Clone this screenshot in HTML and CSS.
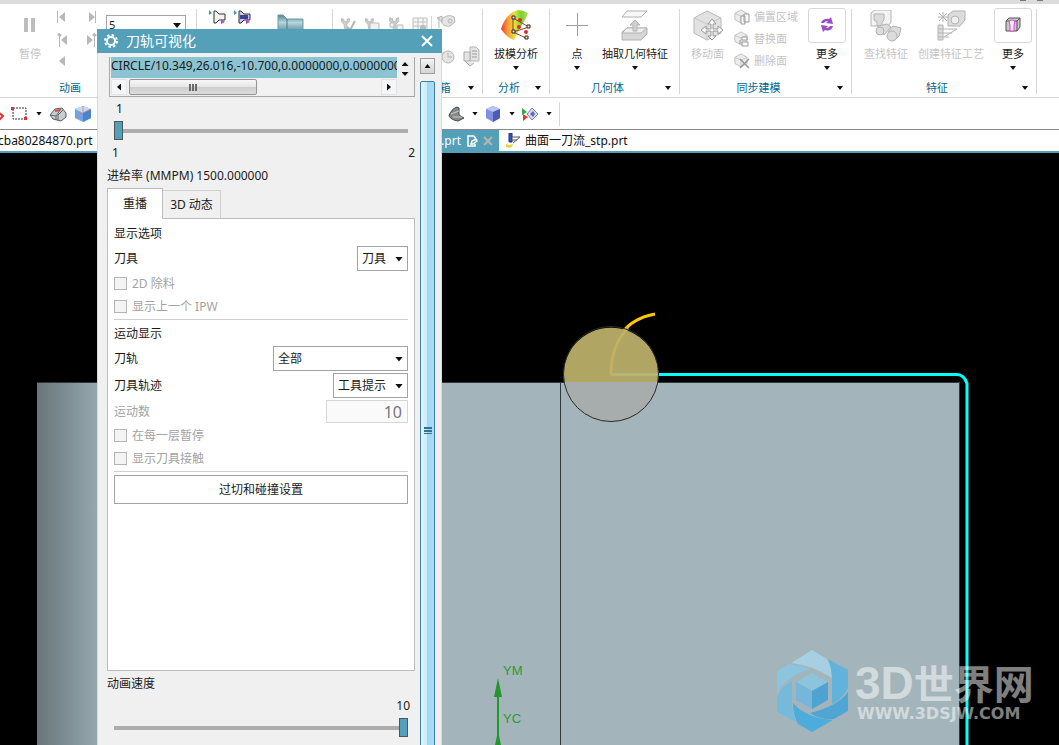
FILE: index.html
```
<!DOCTYPE html>
<html lang="zh-CN">
<head>
    <meta charset="UTF-8">
    <meta name="viewport" content="width=device-width, initial-scale=1.0">
    <title>刀轨可视化</title>
    <link rel="stylesheet" href="styles.css">
</head>
<body>
    <svg class="defs" aria-hidden="true">
        <defs>
            <linearGradient id="partShade">
                <stop offset="0" stop-color="#6a7679"/>
                <stop offset="0.5" stop-color="#83949a"/>
                <stop offset="1" stop-color="#a3b5bb"/>
            </linearGradient>
            <linearGradient id="rainbow">
                <stop offset="0" stop-color="#f03a2c"/>
                <stop offset="0.25" stop-color="#f79a3a"/>
                <stop offset="0.5" stop-color="#e8e236"/>
                <stop offset="0.75" stop-color="#6fd53c"/>
                <stop offset="1" stop-color="#b8e04a"/>
            </linearGradient>
            <linearGradient id="steel" x2="0" y2="1">
                <stop offset="0" stop-color="#4f8596"/>
                <stop offset="0.5" stop-color="#b9d5dc"/>
                <stop offset="1" stop-color="#6c9cab"/>
            </linearGradient>
            <symbol id="greyCube" viewBox="0 0 16 16">
                <path d="M1 5 8 1l7 4v7l-7 4-7-4z" fill="#ececec" stroke="#bcbcbc"/>
                <path d="M1 5l7 3 7-3M8 8v8" fill="none" stroke="#c4c4c4"/>
            </symbol>
            <symbol id="wrench" viewBox="0 0 18 16">
                <path d="M2 1v4l3 3 1 6 3 1V8l3-3V1L9 2v3H5V2z" fill="#cfcfcf" stroke="#b4b4b4"/>
            </symbol>
        </defs>
    </svg>

    <div class="title-strip"><span></span><span></span></div>

    <header class="ribbon">
        <section class="group group-animation">
            <div class="group-body">
                <button class="big-btn pause disabled">
                    <svg width="32" height="32"><path d="M10 8h4v14h-4zM17 8h4v14h-4z" fill="#bdbdbd"/></svg>
                    <span>暂停</span>
                </button>
                <svg class="step-icons" width="42" height="64" fill="#b8b8b8">
                    <path d="M2 1h1v12H2zM10 2v10L4 7zM34 2v10l6-5zM40 1h1v12h-1z"/>
                    <path d="M4 23h1v14H4zM2 25l2-2 3 2-2 2zM12 25v10l-6-5zM32 25v10l6-5zM39 23h1v14h-1zM37 25l2-2 3 2-2 2z"/>
                    <path d="M10 46v10l-6-5z"/>
                </svg>
                <span class="combo frame-combo">
                    <select aria-label="帧"><option>5</option></select>
                </span>
            </div>
            <div class="group-label"><span>动画</span></div>
        </section>
        <section class="group group-tool">
            <div class="group-body">
                <svg width="44" height="20" fill="none" stroke="#333">
                    <path d="M5 1h2l3 3h6v6h-6l-3 3H5z" fill="#f2f2ee"/><path d="M30 1h2l3 3h6v6h-6l-3 3h-2z" fill="#c9cade"/><path d="M31 5h8v4h-8z" fill="#3d3f9c" stroke="none"/>
                    <path d="M0 0v5l3-2zM25 0v5l3-2z" fill="#3c93ba" stroke="none"/>
                    <path d="M12 9v5l4-2zM37 9v5l4-2z" fill="#b24cc0" stroke="none"/>
                </svg>
                <svg class="holder-icon" width="28" height="24"><path d="M1 1h5l4 4h16v11H1z" fill="url(#steel)" stroke="#6d9ba8"/><path d="M10 5v11" stroke="#447a8c"/></svg>
            </div>
        </section>
        <section class="group group-box">
            <div class="group-body">
                <div class="checks">
                    <svg width="16" height="20"><use href="#wrench" width="14" height="16"/><path d="m7 11 3 3 5-9" fill="none" stroke="#b5b5b5" stroke-width="2"/></svg>
                    <svg width="16" height="20"><use href="#wrench" width="14" height="16"/><path d="M6 7h9v8H6z" fill="#f1f1f1" stroke="#bbb"/></svg>
                    <svg width="16" height="20"><use href="#wrench" width="16" height="16"/><path d="M2 7h4v4H2zM9 9h6v6H9z" fill="#f1f1f1" stroke="#bbb"/></svg>
                    <svg width="16" height="20"><path d="M1 2h14v13H1zM1 6h14M1 10h14M6 2v13M11 2v13" fill="#f5f5f5" stroke="#c2c2c2"/><circle cx="11" cy="12" r="3" fill="#bbb"/></svg>
                </div>
                <svg width="50" height="64" fill="#e4e4e4" stroke="#b5b5b5">
                    <path d="M7 8v11M5 9l5 4V7z"/><path d="M10 10c4-4 9-4 12-2l1 5-5 4c-4 1-7-1-8-3z"/><circle cx="18" cy="12" r="2"/>
                    <circle cx="16" cy="48" r="6"/><path d="M16 44v4h4M8 44h4" fill="none"/>
                    <path d="M38 38h6l3 3v11h-9z"/><path d="M40 42h5M40 45h5M40 48h5" stroke="#9d9d9d"/><path d="M32 43h6v9h-6zM33 52l5 5 4-3" stroke="#a9a9a9"/>
                </svg>
            </div>
            <div class="group-label"><span>工具箱</span><i class="arrow"></i></div>
        </section>
        <section class="group group-analysis">
            <div class="group-body">
                <button class="big-btn">
                    <svg width="32" height="32">
                        <path d="M1 19C4 9 10 2 18 0q5 0 10 3-2 6-5 10-5 8-9 17Q7 28 1 19z" fill="url(#rainbow)"/>
                        <path d="M13 8v14l13 6M13 8l16 9-16 5" fill="none" stroke="#9b3a2b"/>
                        <g fill="#e02b2b"><circle cx="20" cy="10" r="2"/><circle cx="19" cy="17" r="2"/><circle cx="26" cy="22" r="2"/></g>
                        <path d="M12 6h3v3h-3zM27 15h3v3h-3zM12 20h3v3h-3zM25 26h3v3h-3z" fill="#ffe85a" stroke="#33205a"/>
                    </svg>
                    <span>拔模分析</span>
                    <i class="arrow"></i>
                </button>
            </div>
            <div class="group-label"><span>分析</span><i class="arrow"></i></div>
        </section>
        <section class="group group-geometry">
            <div class="group-body">
                <button class="big-btn">
                    <svg width="32" height="32"><path d="M16 3v23M5 15h22" stroke="#9c9c9c" stroke-width="1" shape-rendering="crispEdges"/></svg>
                    <span>点</span>
                    <i class="arrow"></i>
                </button>
                <button class="big-btn">
                    <svg width="32" height="32" stroke="#b2b2b2">
                        <path d="M8 1h20l-6 6H3z" fill="#f8f8f8"/>
                        <path d="M3 22l5-4h20v6l-6 6H3z" fill="#d6d6d6"/><path d="M3 23l5-5h20l-6 5z" fill="#efefef"/>
                        <path d="M14 21v-6h-3l5-5 5 5h-3v6z" fill="#d0d0d0"/>
                    </svg>
                    <span>抽取几何特征</span>
                    <i class="arrow"></i>
                </button>
            </div>
            <div class="group-label"><span>几何体</span><i class="arrow"></i></div>
        </section>
        <section class="group group-sync">
            <div class="group-body">
                <button class="big-btn disabled">
                    <svg width="32" height="32">
                        <path d="M2 8 15 1l14 7v15l-14 7-13-7z" fill="#e2e2e2" stroke="#b8b8b8"/><path d="M2 8l13 6 14-6M15 14v16" fill="none" stroke="#c6c6c6"/>
                        <path d="m20 9 4 5h-3v5h5v-3l5 4-5 4v-3h-5v5h3l-4 4-4-4h3v-5h-5v3l-5-4 5-4v3h5v-5h-3z" fill="#fff" stroke="#999"/>
                    </svg>
                    <span>移动面</span>
                </button>
                <div class="small-btns">
                    <button class="small-btn disabled"><svg width="16" height="16"><use href="#greyCube" width="14" height="14"/><path d="M7 7h4v8H7zM10 5h5v8h-5z" fill="#fff" stroke="#999"/></svg>偏置区域</button>
                    <button class="small-btn disabled"><svg width="16" height="16"><use href="#greyCube" width="14" height="14"/><path d="M8 6h5v3H8zM8 11h6v4H8zM6 9v4" fill="#fff" stroke="#999"/></svg>替换面</button>
                    <button class="small-btn disabled"><svg width="16" height="16"><use href="#greyCube" width="14" height="14"/><path d="m6 6 9 9M15 6l-9 9" fill="none" stroke="#999" stroke-width="1.5"/></svg>删除面</button>
                </div>
                <button class="big-btn more">
                    <svg width="32" height="32" fill="#9c4fc4"><path d="M10 14q2-5 8-4l2-2 2 7-7-1 2-2q-3 0-4 2zM22 17q-2 6-8 4l-2 2-2-7 7 1-2 2q3 0 4-2z"/></svg>
                    <span>更多</span>
                    <i class="arrow"></i>
                </button>
            </div>
            <div class="group-label"><span>同步建模</span><i class="arrow"></i></div>
        </section>
        <section class="group group-feature">
            <div class="group-body">
                <button class="big-btn disabled">
                    <svg width="32" height="32" stroke="#b3b3b3" fill="#dcdcdc">
                        <path d="M1 3 5 0h16v12l-3 4H1z" fill="#f3f3f3"/><path d="M4 4h10v6l-2 2v4H7v-4l-3-2z"/>
                        <path d="m8 16 9-2 4 3-7 8z"/><path d="m18 22 5-6 8 2-2 8-5 5z"/><circle cx="10" cy="21" r="4"/><circle cx="22" cy="26" r="5"/>
                    </svg>
                    <span>查找特征</span>
                </button>
                <button class="big-btn disabled">
                    <svg width="32" height="32" stroke="#b3b3b3" fill="#dcdcdc">
                        <path d="m13 5 5-4h12v9l-5 6H13z"/><circle cx="20" cy="10" r="4" fill="#efefef"/>
                        <path d="M8 2v10M3 7h10M4 3l8 8M12 3l-8 8" fill="none"/>
                        <path d="M3 15h5v15H3zM3 19h5M3 23h5M3 27h5M8 19h14M8 23h9M8 27h6M22 19l-13 8"/>
                    </svg>
                    <span>创建特征工艺</span>
                </button>
                <button class="big-btn more">
                    <svg width="32" height="32"><path d="M9 12l3-3h11v9l-3 4H9z" fill="#c8c8c8" stroke="#555"/><path d="M20 12v10M9 12h11l3-3" fill="none" stroke="#555"/><path d="M13 22v-6q-2-5 2-5t2 5v6z" fill="#eee" stroke="#ee3be4"/></svg>
                    <span>更多</span>
                    <i class="arrow"></i>
                </button>
            </div>
            <div class="group-label"><span>特征</span><i class="arrow"></i></div>
        </section>
    </header>

    <nav class="toolbar">
        <div class="tools-left">
            <svg width="4" height="18"><path d="M-2 7 3 11l-4 4" fill="none" stroke="#d33" stroke-width="2"/></svg>
            <svg width="18" height="18"><path d="M2 3h13v11H2z" fill="none" stroke="#333" stroke-dasharray="2 1"/><path d="M0 2h3v3H0zM13 12h3v3h-3z" fill="#e03030"/></svg>
            <i class="arrow"></i>
            <svg width="18" height="18"><path d="m1 10 5-6 7-1 4 5v4l-5 4-8-2z" fill="#c9ced2" stroke="#555b60"/><path d="m1 10 6 1 5-7M7 11v4M9 15v-5l5-5" fill="none" stroke="#62686c"/><path d="m6 6 5-1" stroke="#d84a3c" stroke-width="2"/></svg>
            <svg width="18" height="18"><path d="m1 4 8-3 8 3v9l-8 4-8-4z" fill="#6ea7e8"/><path d="m1 4 8-3 8 3-8 4z" fill="#c3dcf6"/><path d="m9 8 8-4v9l-8 4z" fill="#4b83cf"/><path d="M9 1v7l-8 5M9 8l8-4" fill="none" stroke="#e6705c" stroke-width=".7"/></svg>
        </div>
        <div class="tools-right">
            <svg width="17" height="18"><path d="M1 11Q3 4 9 2l2 1v7l5 3-6 3q-7-1-9-5z" fill="#85898c" stroke="#45494c"/><path d="m3 9 8-3M5 12h9" stroke="#ccc"/></svg>
            <i class="arrow"></i>
            <svg width="17" height="18"><path d="m1 4 7-3 7 3v9l-7 4-7-4z" fill="#7f90e0"/><path d="m1 4 7-3 7 3-7 3z" fill="#b9c5f5"/><path d="m8 7 7-3v9l-7 4z" fill="#4d5cb3"/></svg>
            <i class="arrow"></i>
            <svg width="17" height="18"><path d="M0 3v7l5-3z" fill="#33a845"/><path d="M1 9v7l5-4z" fill="#dc3b30"/><path d="m5 9 5-6 6 6-6 6z" fill="#d5dbf0" stroke="#777fa6"/><path d="m8 9 3-3 2 3-2 3z" fill="#5e6eb2"/></svg>
            <i class="arrow"></i>
            <span class="tool-divider"></span>
        </div>
    </nav>

    <nav class="file-tabs">
        <a class="file-tab first" href="#">cba80284870.prt</a>
        <a class="file-tab active" href="#">.prt
            <svg width="12" height="12" fill="none" stroke="#fff" stroke-width="1.5"><path d="M8 1H2v10h7V9M8 1l2 3M5 9l1-3 4-2 1 2-4 3z"/></svg>
            <svg width="10" height="10"><path d="m1 1 8 8M9 1 1 9" stroke="#b9b4b0" stroke-width="2"/></svg>
        </a>
        <a class="file-tab" href="#">
            <svg width="15" height="16"><path d="M4 0h3v9H4z" fill="#3652b8" stroke="#26357c"/><path d="M7 4h8l-7 6M7 7h5" fill="none" stroke="#555"/><path d="M1 11l3 1 4-1-1 3-3 1-3-1z" fill="#e7d548"/></svg>
            曲面一刀流_stp.prt
        </a>
    </nav>

    <main class="viewport">
        <svg class="scene" viewBox="0 153 1059 592" preserveAspectRatio="xMinYMin slice">
            <!-- workpiece -->
            <path d="M37 382h923v363H37z" fill="#a3b5bb"/>
            <path d="M37 382h75v363H37z" fill="url(#partShade)"/>
            <path d="M37 382.5h922.500V745M560.500 382V745" fill="none" stroke="#30373a"/>
            <!-- tool path -->
            <path d="M610 374.500h347q7 0 10 9v361.500" fill="none" stroke="#00ffff" stroke-width="3"/>
            <path d="M611 374q0-52 44-60" fill="none" stroke="#ffc800" stroke-width="3"/>
            <!-- cutter -->
            <path d="M564 382a47.500 47.500 0 1 1 94 0z" fill="#b1a563"/>
            <path d="M564 382a47.500 47.500 0 0 0 94 0z" fill="#a6adac"/>
            <path d="M611 374.500h47" stroke="#b0b77d" stroke-width="3"/>
            <path d="M611 375q0-30 17-47" fill="none" stroke="#c3b061" stroke-width="3"/>
            <circle cx="611" cy="374" r="47.500" fill="none" stroke="#2b2e2b"/>
            <!-- axes -->
            <path d="M498 690v55" stroke="#229a2b" stroke-width="2"/>
            <path d="m498 678 4 19h-8zM498 731l3 14h-6z" fill="#279331"/>
            <text class="axis" x="503" y="675">YM</text>
            <text class="axis" x="503" y="723">YC</text>
            <!-- site mark -->
            <path d="M791 663 812 650l15 9q5 9 5 19-20-13-41-15z" fill="#a8cfe1"/>
            <path d="m828 659 20 11v18q-6 12-16 16v-24q0-12-4-21z" fill="#61b3dc"/>
            <path d="M848 692v19l-14 8q-14 1-24-6 28-7 38-21z" fill="#4fa5d4"/>
            <path d="M793 703q13 15 40 17l-21 12-14-8q-5-9-5-21z" fill="#4cacdc"/>
            <path d="M777 698v14l19 10q-5-12-4-24v-17q-12 7-15 17z" fill="#75b9db"/>
            <path d="m777 671 12-7q11 1 21 5-26 8-33 26z" fill="#8dc4dd"/>
            <path d="m812 673 16 9-16 9-16-9z" fill="#8dc4dd"/>
            <path d="m796 682 16 9v18l-16-9z" fill="#75b6da"/>
            <path d="m828 682-16 9v18l16-9z" fill="#4fa3d2"/>
            <text class="mark-name" x="855" y="699">3D<tspan class="mark-han">世界网</tspan></text>
            <text class="mark-url" x="857" y="719">WWW.3DSJW.COM</text>
        </svg>
    </main>

    <div class="dialog" role="dialog" aria-labelledby="dialogTitle">
        <div class="dialog-header">
            <svg width="14" height="14" fill="none" stroke="#fff"><circle cx="7" cy="7" r="4" stroke-width="2"/><circle cx="7" cy="7" r="6" stroke-width="2" stroke-dasharray="2.4 2.3"/></svg>
            <h1 id="dialogTitle">刀轨可视化</h1>
            <button class="close-btn" aria-label="关闭"><svg width="12" height="12"><path d="m1 1 10 10M11 1 1 11" stroke="#fff" stroke-width="2"/></svg></button>
        </div>
        <div class="dialog-body">
            <form class="dialog-main">
                <div class="commands">
                    <div class="command-row">CIRCLE/10.349,26.016,-10.700,0.0000000,0.0000000</div>
                    <div class="spin"><i class="arrow up"></i><i class="arrow"></i></div>
                    <div class="h-scroll">
                        <span class="scroll-btn"><i class="arrow left"></i></span>
                        <span class="h-thumb"><i class="grip"></i></span>
                        <span class="scroll-btn end"><i class="arrow right"></i></span>
                    </div>
                </div>

                <label class="step-value" for="step">1</label>
                <input type="range" id="step" min="1" max="2" value="1">
                <div class="range-ends"><span>1</span><span>2</span></div>
                <p class="feed">进给率 (MMPM) 1500.000000</p>

                <div class="tabs">
                    <button type="button" class="tab selected">重播</button>
                    <button type="button" class="tab">3D 动态</button>
                </div>
                <div class="panel">
                    <h2>显示选项</h2>
                    <div class="row">
                        <label for="tool">刀具</label>
                        <span class="combo combo-tool"><select id="tool"><option>刀具</option></select></span>
                    </div>
                    <label class="check"><input type="checkbox" disabled>2D 除料</label>
                    <label class="check"><input type="checkbox" disabled>显示上一个 IPW</label>
                    <hr>
                    <h2>运动显示</h2>
                    <div class="row">
                        <label for="path">刀轨</label>
                        <span class="combo combo-path"><select id="path"><option>全部</option></select></span>
                    </div>
                    <div class="row">
                        <label for="trace">刀具轨迹</label>
                        <span class="combo combo-trace"><select id="trace"><option>工具提示</option></select></span>
                    </div>
                    <div class="row disabled">
                        <label for="moves">运动数</label>
                        <input type="text" id="moves" value="10" disabled>
                    </div>
                    <label class="check"><input type="checkbox" disabled>在每一层暂停</label>
                    <label class="check"><input type="checkbox" disabled>显示刀具接触</label>
                    <hr>
                    <button type="button" class="wide-btn">过切和碰撞设置</button>
                </div>

                <label class="speed" for="speed">动画速度</label>
                <output class="speed-value" for="speed">10</output>
                <input type="range" id="speed" min="1" max="10" value="10">
            </form>
            <div class="v-scroll">
                <span class="scroll-btn raised"><i class="arrow up"></i></span>
                <span class="v-thumb"><i class="grip"></i></span>
            </div>
        </div>
    </div>
</body>
</html>
```

FILE: styles.css
```
* {
    box-sizing: border-box;
}
body {
    display: flex;
    flex-direction: column;
    position: relative;
    height: 100vh;
    margin: 0;
    overflow: hidden;
    font: 12px/16px "Noto Sans", "Noto Sans CJK SC", sans-serif;
    color: #1a1a1a;
    background: #fff;
}
button, select, input {
    font: inherit;
    color: inherit;
    margin: 0;
}
button {
    padding: 0;
    border: none;
    background: none;
    white-space: nowrap;
}
svg {
    display: block;
    flex: none;
}
.defs {
    position: absolute;
    width: 0;
    height: 0;
}
.arrow {
    flex: none;
    width: 6px;
    height: 4px;
    background: #111;
    clip-path: polygon(0 0, 100% 0, 50% 100%);
}
.arrow.up {
    clip-path: polygon(50% 0, 100% 100%, 0 100%);
}
.arrow.left {
    width: 4px;
    height: 7px;
    clip-path: polygon(100% 0, 100% 100%, 0 50%);
}
.arrow.right {
    width: 4px;
    height: 7px;
    clip-path: polygon(0 0, 100% 50%, 0 100%);
}
.title-strip {
    display: flex;
    flex: none;
    justify-content: flex-end;
    gap: 11px;
    height: 4px;
    padding-right: 16px;
    background: #dcdcdc;
}
.title-strip span {
    width: 6px;
    height: 1px;
    background: #777;
}

/* ribbon */
.ribbon {
    display: flex;
    flex: none;
    height: 94px;
    padding-top: 5px;
    border-bottom: 1px solid #d4d4d4;
    font-size: 11px;
}
.group {
    display: flex;
    flex: none;
    flex-direction: column;
    height: 85px;
    border-right: 1px solid #d8d8d8;
}
.group-body {
    display: flex;
    flex: 1;
    justify-content: center;
    align-items: flex-start;
    min-height: 0;
}
.group-label {
    display: flex;
    align-items: center;
    height: 12px;
    padding-right: 8px;
    line-height: 12px;
    color: #00678f;
}
.group-label span {
    flex: 1;
    text-align: center;
    white-space: nowrap;
}
.group-animation {
    width: 197px;
}
.group-animation .group-body {
    justify-content: flex-start;
}
.group-animation .group-label {
    padding-right: 56px;
}
.group-tool {
    width: 136px;
}
.group-tool .group-body {
    justify-content: flex-start;
    gap: 24px;
    padding: 1px 0 0 12px;
}
.holder-icon {
    margin-top: 4px;
}
.group-box {
    width: 150px;
}
.group-box .group-label {
    padding-left: 67px;
}
.checks {
    display: flex;
    gap: 8px;
    margin-top: 7px;
    padding: 0 3px 0 6px;
    border-right: 1px solid #d8d8d8;
}
.group-analysis {
    width: 67px;
}
.group-geometry {
    width: 130px;
}
.group-geometry .group-body {
    gap: 9px;
}
.group-sync {
    width: 172px;
}
.group-sync .group-body {
    gap: 10px;
    padding-left: 6px;
}
.group-feature {
    width: 185px;
}
.group-feature .group-body {
    gap: 10px;
    padding-left: 8px;
}
.big-btn {
    display: flex;
    flex-direction: column;
    align-items: center;
    padding-top: 1px;
}
.big-btn span {
    margin-top: 4px;
}
.big-btn .arrow {
    margin-top: 4px;
}
.pause {
    margin-left: 14px;
}
.more svg {
    width: 38px;
    height: 35px;
    margin-top: -2px;
    padding: 0 2px;
    border: 1px solid #d8d8d8;
    border-radius: 3px;
}
.more span {
    margin-top: 3px;
}
.big-btn.disabled, .small-btn.disabled {
    color: #c4c4c4;
}
.step-icons {
    margin: 1px 0 0 9px;
}
.small-btns {
    display: flex;
    flex-direction: column;
    gap: 6px;
}
.small-btn {
    display: flex;
    align-items: center;
    gap: 4px;
}

/* toolbar and file tabs */
.toolbar {
    display: flex;
    flex: none;
    height: 31px;
}
.tools-left, .tools-right {
    display: flex;
    align-items: center;
    gap: 7px;
}
.tools-left {
    flex: 0 0 448px;
}
.tool-divider {
    width: 1px;
    height: 24px;
    background: #d8d8d8;
}
.file-tabs {
    display: flex;
    flex: none;
    height: 24px;
    border-top: 1px solid #85898c;
    border-bottom: 2px solid #54a0b9;
}
.file-tab {
    display: flex;
    align-items: center;
    gap: 5px;
    padding: 0 6px;
    color: #111;
    text-decoration: none;
    white-space: nowrap;
}
.file-tab.first {
    flex: 0 0 104px;
    margin-left: -2px;
    padding: 0;
}
.file-tab.active {
    flex: 0 0 397px;
    justify-content: flex-end;
    color: #fff;
    background: #54a0b9;
}

/* graphics window */
.viewport {
    flex: 1;
    min-height: 0;
    background: #000;
}
.scene {
    width: 100%;
    height: 100%;
}
.axis {
    font: 13px "Liberation Sans", sans-serif;
    fill: #2b9a35;
}
.mark-name {
    font: bold 46px "Liberation Sans", sans-serif;
    fill: rgba(255, 255, 255, 0.5);
}
.mark-han {
    font: bold 40px "Noto Sans CJK SC", sans-serif;
}
.mark-url {
    font: bold 16px "DejaVu Sans", sans-serif;
    fill: rgba(255, 255, 255, 0.5);
}

/* dialog */
.dialog {
    display: flex;
    flex-direction: column;
    position: absolute;
    top: 29px;
    bottom: 0;
    left: 97px;
    width: 345px;
    background: #f0f0f0;
}
.dialog-header {
    display: flex;
    flex: none;
    align-items: center;
    gap: 8px;
    height: 24px;
    padding: 0 9px 0 7px;
    color: #fff;
    background: #54a0b9;
}
.dialog-header h1 {
    flex: 1;
    margin: 0;
    font-size: 14px;
    font-weight: normal;
}
.dialog-body {
    display: flex;
    flex: 1;
    gap: 5px;
    min-height: 0;
    padding: 4px 6px 0 9px;
    border: 1px solid #d6dadc;
    border-width: 0 1px;
}
.dialog-main {
    display: flex;
    flex: 1;
    flex-direction: column;
    min-width: 0;
    padding-bottom: 8px;
}
.commands {
    display: grid;
    flex: none;
    grid-template-columns: 1fr 16px;
    grid-template-rows: 21px 16px;
    row-gap: 1px;
    height: 40px;
    margin: 0 0 0 2px;
    padding: 0 1px;
    border: 1px solid #a8a8a8;
    border-top: none;
}
.command-row {
    min-width: 0;
    overflow: hidden;
    line-height: 18px;
    white-space: nowrap;
    background: #8bc3d2;
}
.spin {
    display: flex;
    flex-direction: column;
    align-items: center;
    justify-content: space-between;
    padding: 5px 0 2px;
}
.spin .arrow {
    width: 7px;
}
.h-scroll {
    display: flex;
    gap: 2px;
    height: 16px;
    background: #f2f2f2;
}
.scroll-btn {
    display: flex;
    align-items: center;
    justify-content: center;
    width: 16px;
    height: 16px;
    border: 1px solid #e4e4e4;
    background: #f4f6f7;
}
.scroll-btn.end {
    margin-left: auto;
}
.scroll-btn.raised {
    width: 15px;
    border-color: #a0a0a0;
    background: linear-gradient(#f4f4f4, #d4d4d4);
}
.h-thumb {
    display: flex;
    align-items: center;
    justify-content: center;
    width: 128px;
    border: 1px solid #959595;
    border-radius: 2px;
    background: linear-gradient(#f6f6f6, #e6e6e6 50%, #cdcdcf 50%, #dcdcdc);
}
.grip {
    width: 8px;
    height: 7px;
    background: repeating-linear-gradient(90deg, #6b6b6b 0 2px, transparent 2px 3px);
}
.step-value {
    flex: none;
    margin: 4px 0 4px 9px;
}
input[type="range"] {
    appearance: none;
    flex: none;
    width: auto;
    height: 19px;
    margin: 0 7px;
    background: linear-gradient(#adadad, #adadad) center / 100% 4px no-repeat;
}
input[type="range"]::-webkit-slider-thumb {
    appearance: none;
    width: 9px;
    height: 19px;
    border: 1px solid #4f5558;
    background: #54a0b9;
}
.range-ends {
    display: flex;
    justify-content: space-between;
    margin: 5px 0 0 5px;
}
.feed {
    margin: 7px 0 4px;
}
.tabs {
    display: flex;
    align-items: flex-end;
    position: relative;
    height: 30px;
}
.tab {
    width: 58px;
    height: 28px;
    border: 1px solid #d0d0d0;
    border-width: 1px 1px 0 0;
}
.tab.selected {
    width: 56px;
    height: 31px;
    margin-bottom: -1px;
    border: 1px solid #bdbdbd;
    border-bottom: none;
    background: #fff;
}
.panel {
    flex: 1;
    min-height: 0;
    padding: 4px 6px;
    border: 1px solid #bdbdbd;
    background: #fff;
}
.panel h2 {
    margin: 0 0 3px;
    padding-top: 2px;
    font-size: 12px;
    font-weight: normal;
    line-height: 18px;
}
.row {
    display: flex;
    align-items: center;
    justify-content: space-between;
    margin-bottom: 1px;
}
.row + .row {
    padding-top: 1px;
}
.row.disabled, .check {
    color: #a3a3a3;
}
.combo {
    display: block;
    position: relative;
    height: 25px;
}
.combo::after {
    content: "";
    position: absolute;
    top: 50%;
    right: 5px;
    width: 8px;
    height: 5px;
    margin-top: -2px;
    background: #111;
    clip-path: polygon(0 0, 100% 0, 50% 100%);
    pointer-events: none;
}
.combo select {
    appearance: none;
    display: block;
    width: 100%;
    height: 100%;
    padding: 0 4px;
    border: 1px solid #a3a3a3;
    border-radius: 0;
    background: #fff;
}
.combo.frame-combo {
    width: 80px;
    height: 20px;
    margin: 6px 0 0 9px;
}
.frame-combo select {
    padding: 0 2px;
}
.combo-tool {
    width: 51px;
}
.combo-path {
    width: 135px;
}
.combo-trace {
    width: 75px;
}
.row input {
    width: 82px;
    height: 23px;
    padding: 0 5px;
    border: 1px solid #d6d6d6;
    font-size: 16px;
    text-align: right;
    color: #777;
    background: #fafafa;
}
.check {
    display: flex;
    align-items: center;
    gap: 5px;
    height: 23px;
}
.check input {
    appearance: none;
    width: 13px;
    height: 13px;
    border: 1px solid #b5b5b5;
    background: #f4f4f4;
}
.panel hr {
    height: 1px;
    margin: 1px 0 3px;
    border: none;
    background: #d0d0d0;
}
.wide-btn {
    width: 100%;
    height: 29px;
    border: 1px solid #a3a3a3;
    background: #fff;
}
.speed {
    flex: none;
    margin-top: 5px;
}
.speed-value {
    flex: none;
    margin: 6px 5px 4px;
    text-align: right;
}
.v-scroll {
    display: flex;
    flex: none;
    flex-direction: column;
    gap: 7px;
    width: 15px;
    padding-top: 1px;
}
.v-thumb {
    display: flex;
    flex: 1;
    align-items: center;
    justify-content: center;
    margin-bottom: -34px;
    border: 1px solid #3c7fa6;
    border-radius: 2px;
    background: linear-gradient(90deg, #e6f5fc, #c9eafa 45%, #a3d7f2 50%, #a9dcf7);
}
.v-thumb .grip {
    background: repeating-linear-gradient(#356f92 0 2px, transparent 2px 3px);
}
```
